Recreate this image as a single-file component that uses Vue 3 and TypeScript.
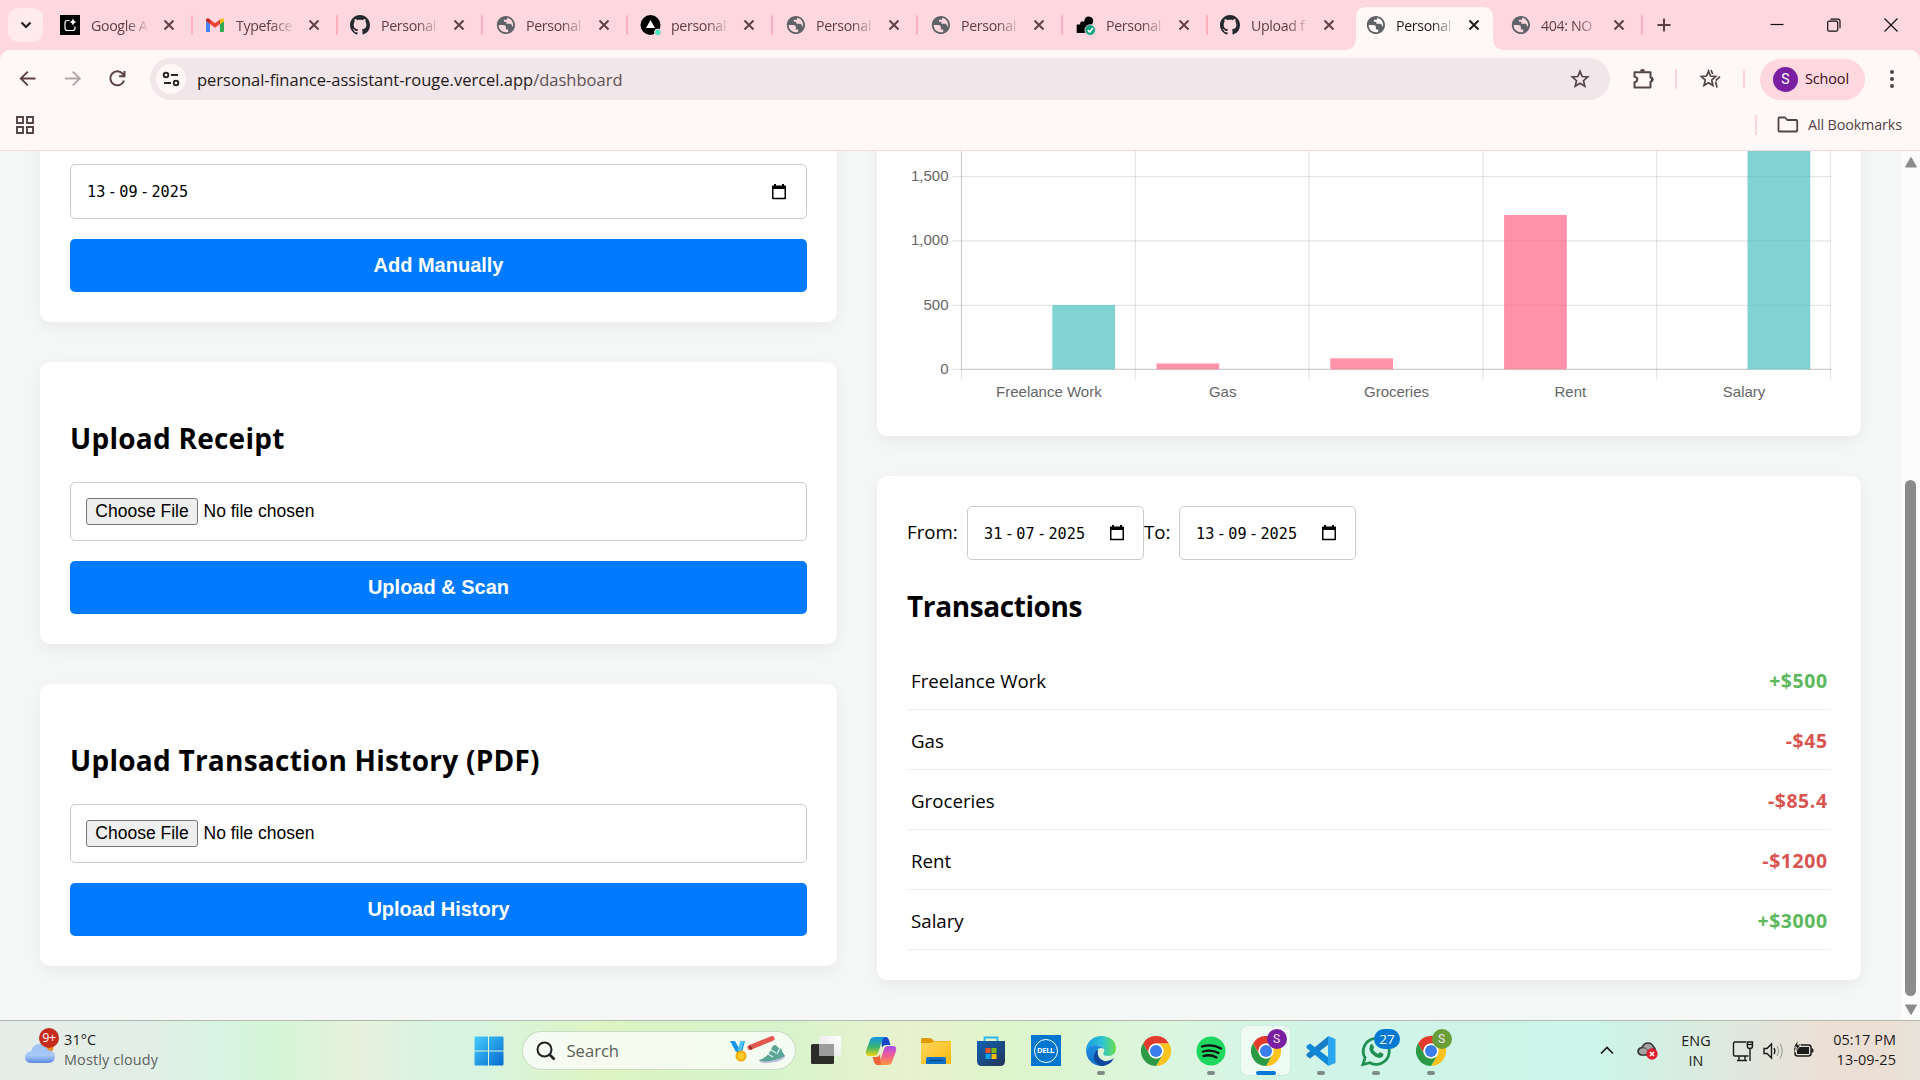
<script setup lang="ts">
interface Tab {
  title: string
  icon: 'studio' | 'gmail' | 'github' | 'globe' | 'vercel' | 'render'
  active?: boolean
}

const tabs: Tab[] = [
  { title: 'Google A', icon: 'studio' },
  { title: 'Typeface', icon: 'gmail' },
  { title: 'Personal', icon: 'github' },
  { title: 'Personal', icon: 'globe' },
  { title: 'personal', icon: 'vercel' },
  { title: 'Personal', icon: 'globe' },
  { title: 'Personal', icon: 'globe' },
  { title: 'Personal', icon: 'render' },
  { title: 'Upload f', icon: 'github' },
  { title: 'Personal', icon: 'globe', active: true },
  { title: '404: NO', icon: 'globe' },
]

const uploads = [
  { heading: 'Upload Receipt', action: 'Upload & Scan' },
  { heading: 'Upload Transaction History (PDF)', action: 'Upload History' },
]

const transactions = [
  { name: 'Freelance Work', amount: 500 },
  { name: 'Gas', amount: -45 },
  { name: 'Groceries', amount: -85.4 },
  { name: 'Rent', amount: -1200 },
  { name: 'Salary', amount: 3000 },
]

const formatAmount = (n: number): string => `${n < 0 ? '-' : '+'}$${Math.abs(n)}`

const AXIS_X = 54.5
const BASE_Y = 188.3
const COL = 173.8
const UNIT = 64.3 / 500

const bars = transactions.map((t, i) => {
  const height = Math.abs(t.amount) * UNIT
  return {
    label: t.name,
    center: AXIS_X + COL * (i + 0.5),
    x: AXIS_X + COL * i + (t.amount > 0 ? 90.8 : 21.2),
    y: BASE_Y - height,
    height,
    fill: t.amount > 0 ? 'rgba(75,192,192,0.7)' : 'rgba(255,99,132,0.7)',
  }
})

const yTicks = [
  { label: '0', y: BASE_Y },
  { label: '500', y: BASE_Y - 64 },
  { label: '1,000', y: BASE_Y - 128.4 },
  { label: '1,500', y: BASE_Y - 192.8 },
]

const ranges = [
  { label: 'From:', parts: ['31', '07', '2025'] },
  { label: 'To:', parts: ['13', '09', '2025'] },
]
</script>

<template>
  <div class="screen">
    <svg width="0" height="0" class="defs">
      <defs>
        <symbol id="chrome" viewBox="0 0 48 48">
          <path fill="#e33b2e" d="M24 12h20.8A24 24 0 0 0 3.2 12L13.6 30A12 12 0 0 1 24 12z" />
          <path fill="#fcc31e" d="M44.8 12H24a12 12 0 0 1 10.4 18L24 48A24 24 0 0 0 44.8 12z" />
          <path fill="#2c9a45" d="M3.2 12l10.4 18a12 12 0 0 0 20.8 0L24 48A24 24 0 0 1 3.2 12z" />
          <circle cx="24" cy="24" r="12" fill="#fff" />
          <circle cx="24" cy="24" r="9.6" fill="#3b7ded" />
        </symbol>
        <symbol id="calendar" viewBox="0 0 14 16">
          <path fill="#000" fill-rule="evenodd" d="M2 0h2v1.5h6V0h2v1.5h1.2q.8 0 .8.8v12.2q0 .8-.8.8H.8q-.8 0-.8-.8V2.300q0-.8.8-.8H2zM1.500 5v8.800h11V5z" />
        </symbol>
        <symbol id="close" viewBox="0 0 12 12">
          <path d="M1.500 1.500l9 9M10.500 1.500l-9 9" stroke="currentColor" stroke-width="1.900" fill="none" />
        </symbol>
      </defs>
    </svg>

    <header class="browser">
      <div class="tabstrip">
        <button class="tab-search">
          <svg width="12" height="8" viewBox="0 0 12 8"><path d="M1.500 1.500L6 6l4.500-4.500" fill="none" stroke="#1f1a1b" stroke-width="2.200" /></svg>
        </button>
        <div class="tabs">
          <div v-for="(tab, i) in tabs" :key="i" class="tab" :class="{ active: tab.active, 'no-sep': i === 8 || i === 9 }">
            <svg v-if="tab.icon === 'studio'" class="favicon" viewBox="0 0 20 20">
              <rect width="20" height="20" fill="#000" />
              <path d="M9.500 5.500h-2Q5 5.500 5 8v5q0 2.500 2.500 2.500h5q2.500 0 2.500-2.500v-1.500" fill="none" stroke="#fff" stroke-width="1.200" />
              <path d="M13 3q.5 3.500 3.500 4-3 .5-3.500 4-.5-3.500-3.500-4 3-.5 3.500-4z" fill="#fff" />
            </svg>
            <svg v-else-if="tab.icon === 'gmail'" class="favicon" viewBox="0 0 20 20">
              <path fill="#4285f4" d="M1 17V6l4 3v8H2z" />
              <path fill="#34a853" d="M15 17V9l4-3v10q0 1-1 1z" />
              <path fill="#fbbc04" d="M15 9V4.500l1-.8q3-1.200 3 1.800V6z" />
              <path fill="#c5221f" d="M1 6v-.5Q1 2.500 4 3.700L5 4.500V9z" />
              <path fill="#ea4335" d="M5 4.500L10 8.200l5-3.700V9l-5 3.700L5 9z" />
            </svg>
            <svg v-else-if="tab.icon === 'github'" class="favicon" viewBox="0 0 16 16">
              <path fill="#24292f" d="M8 0C3.580 0 0 3.580 0 8c0 3.540 2.290 6.530 5.470 7.590.4.070.55-.17.55-.38 0-.19-.01-.82-.01-1.490-2.010.37-2.530-.49-2.690-.94-.09-.23-.48-.94-.82-1.130-.28-.15-.68-.52-.01-.53.63-.01 1.080.58 1.230.82.72 1.210 1.870.87 2.330.66.070-.52.28-.87.51-1.070-1.780-.2-3.640-.89-3.640-3.950 0-.87.31-1.590.82-2.150-.08-.2-.36-1.020.08-2.120 0 0 .67-.21 2.200.82.64-.18 1.320-.27 2-.27s1.360.09 2 .27c1.530-1.040 2.200-.82 2.200-.82.44 1.100.16 1.920.08 2.120.51.56.82 1.270.82 2.150 0 3.070-1.870 3.750-3.650 3.950.29.25.54.73.54 1.480 0 1.070-.01 1.930-.01 2.200 0 .21.15.46.55.38A8.010 8.010 0 0 0 16 8c0-4.420-3.580-8-8-8z" />
            </svg>
            <svg v-else-if="tab.icon === 'globe'" class="favicon" viewBox="0 1 22 22">
              <path fill="#5f6368" d="M12 2C6.480 2 2 6.480 2 12s4.480 10 10 10 10-4.480 10-10S17.520 2 12 2zm-8 10h4.700c2.300 0 3.300.9 3.300 2.800v2.200h2.500v2.600c-5 1.600-10.500-2-10.500-7.600zm15.800 1.800c-.7-.2-1.300-.8-1.500-1.800-.2-1-.9-1.500-2-1.500H12.500V8.500H9.800V6.300h3.500V4.100c4.400.7 7.300 4.800 6.500 9.700z" />
            </svg>
            <svg v-else-if="tab.icon === 'vercel'" class="favicon" viewBox="-0.5 0 20 20">
              <circle cx="10" cy="10" r="10" fill="#000" />
              <path d="M10 5l4.500 8h-9z" fill="#fff" />
              <circle cx="17.300" cy="17.300" r="3.300" fill="#50e3c2" stroke="#ffd7de" />
            </svg>
            <svg v-else class="favicon" viewBox="-0.7 0 20 20">
              <path d="M1 18V9.500h3.500V8q0-1.500 1.500-1.500h2.500Q9 1.500 13 1.500q4.500.3 4.500 4.500 0 3.500-4 4.500v7.500z" fill="#000" />
              <circle cx="14.500" cy="15" r="5.300" fill="#0ea37f" stroke="#ffd7de" stroke-width=".8" />
              <path d="M12 15l2 2 3.200-4" fill="none" stroke="#fff" stroke-width="1.600" />
            </svg>
            <span class="tab-title">{{ tab.title }}</span>
            <svg class="tab-close" width="12" height="12"><use href="#close" /></svg>
          </div>
        </div>
        <svg class="new-tab" width="14" height="14" viewBox="0 0 14 14"><path d="M7 .5v13M.5 7h13" stroke="#5c4046" stroke-width="2" /></svg>
        <div class="window-controls">
          <svg width="14" height="14" viewBox="0 0 14 14"><path d="M.5 6.500h13" stroke="#111" stroke-width="1.200" /></svg>
          <svg width="14" height="14" viewBox="0 0 14 14" fill="none" stroke="#111" stroke-width="1.200"><rect x=".7" y="3.200" width="10" height="10" rx="1.500" /><path d="M3.500 1.200H11q2 0 2 2v7" /></svg>
          <svg width="14" height="14" viewBox="0 0 14 14"><path d="M.5.5l13 13M13.500.5l-13 13" stroke="#111" stroke-width="1.200" /></svg>
        </div>
      </div>

      <div class="toolbar">
        <svg class="nav" width="20" height="20" viewBox="0 0 20 20" fill="none" stroke="#5c4046" stroke-width="1.900"><path d="M17.500 9.500H3M9.800 2.600L2.800 9.500l7 6.900" /></svg>
        <svg class="nav" width="20" height="20" viewBox="0 0 20 20" fill="none" stroke="#b3a5a7" stroke-width="1.900"><path d="M2 9.500h15M9.800 2.600l7 6.900-7 6.900" /></svg>
        <svg class="nav" width="20" height="20" viewBox="0 0 20 20" fill="none" stroke="#5c4046" stroke-width="2"><path d="M16 11.500A7 7 0 1 1 15 5.200L16.500 7M16.500 2v5.300h-5.400" /></svg>
        <div class="omnibox">
          <span class="site-info">
            <svg width="18" height="16" viewBox="0 0 18 16" fill="none" stroke="#2a2224" stroke-width="1.900"><circle cx="4" cy="4" r="2.300" /><path d="M9 4h7M2 12h7" /><circle cx="14" cy="12" r="2.300" /></svg>
          </span>
          <span class="url">personal-finance-assistant-rouge.vercel.app<span class="path">/dashboard</span></span>
          <svg class="bookmark-star" width="20" height="20" viewBox="0 0 20 20" fill="none" stroke="#544347" stroke-width="1.700"><path d="M10 2.300l2.200 5.200 5.600.5-4.300 3.700 1.300 5.500L10 14.300l-4.800 2.900 1.300-5.500L2.200 8l5.600-.5z" /></svg>
        </div>
        <svg class="ext" width="22" height="22" viewBox="0 0 22 22"><path d="M2.500 4.200h16v5.300a2 2 0 0 1 0 4v6h-16v-5.200q2.800-.4 2.800-2.800T2.500 8.700z" fill="none" stroke="#544347" stroke-width="2" stroke-linejoin="round" /><path d="M8 3.500a2.500 2.500 0 0 1 5 0zM19 9a2.500 2.500 0 0 1 0 5z" fill="#544347" /></svg>
        <i class="sep" />
        <svg class="split-star" width="22" height="22" viewBox="0 0 22 22" fill="none" stroke="#544347" stroke-width="1.700"><path d="M9.500 3l2 5 5.200.5-4 3.500 1.200 5.500-4.400-2.800L5 17.500 6.300 12l-4-3.500L7.600 8zM12 2l1.700 4M21 8.700l-4.300 4M16.500 13.500l1.600 6" /></svg>
        <i class="sep" />
        <div class="profile"><span class="avatar">S</span><span class="profile-name">School</span></div>
        <svg class="menu" width="6" height="20" viewBox="0 0 6 20" fill="#544347"><circle cx="3" cy="3" r="2" /><circle cx="3" cy="10" r="2" /><circle cx="3" cy="17" r="2" /></svg>
      </div>

      <div class="bookmarks">
        <svg width="18" height="18" viewBox="0 0 18 18" fill="none" stroke="#544347" stroke-width="1.900"><path d="M1 1h6v6H1zM11 1h6v6h-6zM1 11h6v6H1zM11 11h6v6h-6z" /></svg>
        <i class="sep" />
        <svg class="folder" width="22" height="18" viewBox="0 0 22 18" fill="none" stroke="#544347" stroke-width="1.800" stroke-linejoin="round"><path d="M1.500 14.500v-12q0-1 1-1H8L10.200 4h9q1 0 1 1v9.500q0 1-1 1H2.500q-1 0-1-1z" /></svg>
        <span class="all-bookmarks">All Bookmarks</span>
      </div>
    </header>

    <main class="viewport">
      <div class="page">
        <div class="column left">
          <section class="card manual">
            <div class="field date wide">
              <span class="date-text"><span>13</span><i>-</i><span>09</span><i>-</i><span>2025</span></span>
              <svg width="14" height="16"><use href="#calendar" /></svg>
            </div>
            <button class="primary">Add Manually</button>
          </section>
          <section v-for="u in uploads" :key="u.heading" class="card upload">
            <h2>{{ u.heading }}</h2>
            <div class="field file"><span class="choose">Choose File</span><span class="file-name">No file chosen</span></div>
            <button class="primary">{{ u.action }}</button>
          </section>
        </div>

        <div class="column right">
          <section class="card chart-card">
            <svg class="chart" width="924" height="225" viewBox="0 0 924 225">
              <g stroke="rgba(0,0,0,0.1)" stroke-width="1.250">
                <path v-for="t in yTicks" :key="t.label" :d="`M45 ${t.y}H924`" />
                <path v-for="n in 6" :key="n" :d="`M${AXIS_X + COL * (n - 1)} -40V198.500`" />
                <path :d="`M${AXIS_X} -40V${BASE_Y}H924`" fill="none" />
              </g>
              <rect v-for="b in bars" :key="b.label" :x="b.x" :y="b.y" width="62.700" :height="b.height" :fill="b.fill" />
              <g class="tick-text" text-anchor="end">
                <text v-for="t in yTicks" :key="t.label" x="41.500" :y="t.y + 4.4">{{ t.label }}</text>
              </g>
              <g class="tick-text" text-anchor="middle">
                <text v-for="b in bars" :key="b.label" :x="b.center + 0.5" y="216">{{ b.label }}</text>
              </g>
            </svg>
          </section>

          <section class="card list-card">
            <div class="filters">
              <label v-for="r in ranges" :key="r.label">
                <span class="filter-label">{{ r.label }}</span>
                <span class="field date">
                  <span class="date-text"><span>{{ r.parts[0] }}</span><i>-</i><span>{{ r.parts[1] }}</span><i>-</i><span>{{ r.parts[2] }}</span></span>
                  <svg width="14" height="16"><use href="#calendar" /></svg>
                </span>
              </label>
            </div>
            <h2>Transactions</h2>
            <ul>
              <li v-for="t in transactions" :key="t.name">
                <span>{{ t.name }}</span>
                <b :class="t.amount < 0 ? 'expense' : 'income'">{{ formatAmount(t.amount) }}</b>
              </li>
            </ul>
          </section>
        </div>
      </div>
      <div class="scrollbar">
        <svg width="12" height="11" viewBox="0 0 12 11"><path d="M6 .5L11.500 10H.5z" fill="#8b8b8b" stroke="#8b8b8b" stroke-linejoin="round" /></svg>
        <i class="thumb" />
        <svg width="12" height="11" viewBox="0 0 12 11"><path d="M6 10.500L11.500 1H.5z" fill="#8b8b8b" stroke="#8b8b8b" stroke-linejoin="round" /></svg>
      </div>
    </main>

    <footer class="taskbar">
      <div class="weather">
        <span class="weather-icon">
          <svg width="32" height="22" viewBox="0 0 32 22">
            <defs><linearGradient id="cl" x2="0" y2="1"><stop stop-color="#9cc0f5" /><stop offset=".6" stop-color="#a9c8f8" /><stop offset="1" stop-color="#5d88df" /></linearGradient></defs>
            <circle cx="25" cy="6" r="4.500" fill="#f28a1c" />
            <path d="M8 21q-7 0-7-6 0-5 6-5.500Q8.500 2 16 2q6 0 8 6 7 .5 7 6.500T24 21z" fill="url(#cl)" />
          </svg>
          <span class="alert">9+</span>
        </span>
        <div class="weather-text"><span>31°C</span><span class="dim">Mostly cloudy</span></div>
      </div>

      <div class="launcher">
        <svg class="start" width="30" height="30" viewBox="0 0 30 30">
          <defs><linearGradient id="wn" x2="1" y2="1"><stop stop-color="#46cdfb" /><stop offset="1" stop-color="#0569cf" /></linearGradient></defs>
          <path fill="url(#wn)" d="M1.500.5H14v14H.5v-13q0-1 1-1zM15 .5h13.500q1 0 1 1v13H15zM.5 15.500H14v14H1.500q-1 0-1-1zM15 15.500h14.500v13q0 1-1 1H15z" />
        </svg>
        <div class="search">
          <svg width="20" height="20" viewBox="0 0 20 20" fill="none" stroke="#222" stroke-width="2"><circle cx="8.500" cy="8.500" r="7" /><path d="M13.500 13.500l5 5" stroke-width="2.600" /></svg>
          <span>Search</span>
          <svg class="highlight" width="56" height="30" viewBox="0 0 56 30">
            <path d="M0 5h5l4 7 1.500-7H15l-3 11H6z" fill="#1597e8" />
            <path d="M10 5h4l-3 10H8z" fill="#53c5f7" />
            <circle cx="11" cy="20" r="5.500" fill="#f5a800" /><circle cx="11" cy="20" r="3.500" fill="#ffcc25" />
            <path d="M20 11.500L42 2.500" stroke="#e4574f" stroke-width="5" stroke-linecap="round" /><path d="M19.500 10l2 3.500" stroke="#9b2b31" stroke-width="2.500" />
            <path d="M29 24q8-2 12-10 1-5 5-5 2 4 5 3 1 4 4 8-2 5-12 6-13 1-14-2z" fill="#5aa596" />
            <path d="M29 25q14 2 26-5 0 4-11 6-12 3-15-1z" fill="#c9bfe2" />
            <path d="M38 18l5 3M41 14l5 3M50 12l-3 6" stroke="#dff3ee" stroke-width="1.200" />
          </svg>
        </div>
        <div class="apps">
          <span class="app">
            <svg width="30" height="30" viewBox="0 0 30 30"><defs><linearGradient id="tv" x1="1" x2="0" y2="1"><stop stop-color="#fff" /><stop offset="1" stop-color="#e0e0e0" /></linearGradient></defs><rect y="8" width="23" height="20" rx="1.500" fill="#2c2c2a" /><rect x="8" width="22" height="20" rx="1.500" fill="url(#tv)" /><path d="M8 8h15v12H9.500Q8 20 8 18.500z" fill="#9c9c9c" /></svg>
          </span>
          <span class="app">
            <svg width="32" height="30" viewBox="0 0 32 30">
              <defs>
                <linearGradient id="c1" x2="0" y2="1"><stop stop-color="#1397e8" /><stop offset=".55" stop-color="#3fb46b" /><stop offset="1" stop-color="#f3d513" /></linearGradient>
                <linearGradient id="c2" x2="0" y2="1"><stop stop-color="#a74fe8" /><stop offset=".5" stop-color="#ef5d92" /><stop offset="1" stop-color="#fb9a3c" /></linearGradient>
              </defs>
              <path d="M16 1h5q2 0 3 3l1.500 5H21q-3 0-4 3z" fill="#1647c9" />
              <path d="M10 1h10q-2 1-3 4l-4 12q-1 3-4 3H4q-4 0-3-5L5 4q1-3 5-3z" fill="url(#c1)" />
              <path d="M22 29H12q2-1 3-4l4-12q1-3 4-3h5q4 0 3 5l-4 11q-1 3-5 3z" fill="url(#c2)" />
              <path d="M16 29h-4q-2 0-3-3l-1.500-5H11q3 0 4-3z" fill="#f0643a" />
            </svg>
          </span>
          <span class="app">
            <svg width="30" height="28" viewBox="0 0 30 28"><defs><linearGradient id="fd" x2="1" y2="1"><stop stop-color="#ffd75e" /><stop offset="1" stop-color="#fdb90f" /></linearGradient></defs><path d="M0 8V2.500Q0 1 1.500 1H9q1.500 0 2.500 1.500L13 4h15.500q1.500 0 1.500 1.500V8z" fill="#de9b06" /><path d="M0 6h9q2 0 3.500-1.500H30V27H0z" fill="url(#fd)" /><path d="M5 27v-5q0-2 2-2h16q2 0 2 2v5z" fill="#0a70c8" /><path d="M8.500 23.500h13" stroke="#05427f" stroke-width="1.300" /></svg>
          </span>
          <span class="app">
            <svg width="30" height="30" viewBox="0 0 30 30"><defs><linearGradient id="st" x2="1" y2="1"><stop stop-color="#1062b4" /><stop offset="1" stop-color="#233457" /></linearGradient></defs><path d="M8.500 7V1.500h13V7" fill="none" stroke="#2db8f0" stroke-width="1.800" /><path d="M1 5h28v20q0 5-5 5H6q-5 0-5-5z" fill="url(#st)" /><path d="M9.500 12h5v5h-5z" fill="#f35325" /><path d="M15.500 12h5v5h-5z" fill="#81bc06" /><path d="M9.500 18h5v5h-5z" fill="#05a6f0" /><path d="M15.500 18h5v5h-5z" fill="#ffba08" /></svg>
          </span>
          <span class="app"><span class="dell"><b>DELL</b></span></span>
          <span class="app">
            <svg width="30" height="30" viewBox="0 0 30 30">
              <defs><linearGradient id="eg" x2="1"><stop stop-color="#1b9de2" /><stop offset=".55" stop-color="#2cc3d3" /><stop offset="1" stop-color="#6be04c" /></linearGradient><linearGradient id="eb" x2="0" y2="1"><stop stop-color="#1d8fe0" /><stop offset="1" stop-color="#1470c8" /></linearGradient></defs>
              <path d="M0 14A15 15 0 0 1 15 0q14.500.5 15 12.500-.5 7.500-7.500 7.500-5 0-5.500-2.500 2-1.500 1-4.500-2-4-8-4-6 0-10 5z" fill="url(#eg)" />
              <path d="M0 14q3-5 10-5 6 .5 8 4-5-2.500-7.500 2-2 7 5 12l3 2.700Q15 30.500 10 29 0 25 0 14z" fill="url(#eb)" />
              <path d="M12 13.500q-1.500 9 6 11.500 5 1 10-3-4 8-13 8-8-3-7-10 .5-4 4-6.500z" fill="#11479a" />
            </svg>
            <i class="dot" />
          </span>
          <span class="app"><svg width="30" height="30"><use href="#chrome" /></svg></span>
          <span class="app">
            <svg width="30" height="30" viewBox="0 0 30 30"><circle cx="15" cy="15" r="14.500" fill="#1ed760" /><path d="M6 10.500q10-3 19 2M7 15.500q8.500-2.500 15.500 1.500M7.500 20q7-2 13 1.500" fill="none" stroke="#111" stroke-width="2.300" stroke-linecap="round" /></svg>
            <i class="dot" />
          </span>
          <span class="app current"><svg width="30" height="30"><use href="#chrome" /></svg><em class="who purple">S</em><i class="dot" /></span>
          <span class="app">
            <svg width="30" height="30" viewBox="0 0 30 30"><path d="M22.500 0v8.500L4 22.500.5 20v-2z" fill="#1a7fc9" /><path d="M22.500 30v-8.500L4 7.500.5 10v2z" fill="#1188d8" /><path d="M22 0l7.500 3v24L22 30z" fill="#2aa5ee" /></svg>
            <i class="dot" />
          </span>
          <span class="app">
            <svg width="30" height="30" viewBox="0 0 30 30"><path d="M2 28.500l2-6.700A13 13 0 1 1 9 26.700z" fill="none" stroke="#1f8f52" stroke-width="2.800" /><path d="M10 8q1.500-.5 2.500 2l.5 2q-1 1-1 1.500 2 3.500 5 4.500l2-2 3.500 2q0 3.500-4 4-4-.3-8-4.500-4-5-.5-9.500z" fill="#1f8f52" /></svg>
            <em class="count">27</em><i class="dot" />
          </span>
          <span class="app"><svg width="30" height="30"><use href="#chrome" /></svg><em class="who green">S</em><i class="dot" /></span>
        </div>
      </div>

      <div class="tray">
        <svg class="chevron" width="14" height="9" viewBox="0 0 14 9"><path d="M1 7.500l6-6 6 6" fill="none" stroke="#1b1b1b" stroke-width="1.700" /></svg>
        <svg class="cloud" width="22" height="20" viewBox="0 0 22 20"><path d="M4 14q-3-1-3-4 .5-3 4-3.500Q7 2 11 2t5.500 4q2 1 2 5l-7 3z" fill="#a5a5a5" stroke="#333" stroke-width="1.600" /><path d="M5 6.500q4 0 6 3l7-3" fill="none" stroke="#444" /><circle cx="15" cy="13" r="5.700" fill="#e0212e" /><path d="M13 11l4 4M17 11l-4 4" stroke="#fff" stroke-width="1.500" /></svg>
        <div class="lang"><span>ENG</span><span>IN</span></div>
        <svg class="net" width="22" height="22" viewBox="0 0 22 22" fill="none" stroke="#1b1b1b" stroke-width="1.400"><path d="M14 2H3Q1.500 2 1.500 3.500v11Q1.500 16 3 16h13.500M7 16v4M13 16v4M5 20.500h10M18 9v12" /><path d="M15.300 2h5.200v4q0 2.500-2.600 2.500T15.300 6zM15.300 4.500h5" /></svg>
        <svg class="vol" width="22" height="18" viewBox="0 0 22 18" fill="none" stroke="#1b1b1b" stroke-width="1.400"><path d="M1 6.500h3L8.500 2v14L4 11.500H1z" /><path d="M11 6q1.800 3 0 6" /><path d="M14 4q3 5 0 10M17 1.500q4.500 7.500 0 15" stroke="#a8aea6" /></svg>
        <svg class="bat" width="22" height="18" viewBox="0 0 22 18"><rect x="2" y="4" width="16" height="11" rx="2.500" fill="none" stroke="#1b1b1b" stroke-width="1.500" /><rect x="4" y="6" width="12" height="7" fill="#1b1b1b" /><path d="M18.500 7.500H20q1 2 0 4h-1.500z" fill="#1b1b1b" /><path d="M5 -1L.5 6h3L2 11 7.800 4h-3z" fill="#1b1b1b" stroke="#e6e4da" stroke-width=".9" /></svg>
        <div class="clock"><span>05:17 PM</span><span>13-09-25</span></div>
      </div>
    </footer>
  </div>
</template>

<style>
html, body { margin: 0; overflow: hidden; }
</style>

<style scoped>
* { box-sizing: border-box; }
.screen {
  width: 1920px; height: 1080px; display: flex; flex-direction: column; overflow: hidden;
  font-family: "Open Sans", "Noto Sans", sans-serif; color: #000;
}
.defs { position: absolute; }
svg { display: block; flex: none; overflow: visible; }
button { border: 0; padding: 0; font: inherit; }
i, em { font-style: normal; }

.browser { height: 151px; flex: none; background: #ffd7de; border-bottom: 1px solid #f9d9df; display: flex; flex-direction: column; }
.tabstrip { height: 50px; flex: none; display: flex; align-items: center; }
.tab-search { width: 35px; height: 34px; margin: 0 5px 0 8px; border-radius: 10px; background: #ffebee; display: flex; align-items: center; justify-content: center; }
.tabs { display: flex; height: 50px; }
.tab { width: 145px; height: 50px; display: flex; align-items: center; padding-left: 12px; position: relative; color: #5c4046; }
.tab::after { content: ""; position: absolute; right: 0; top: 15px; width: 2px; height: 20px; border-radius: 1px; background: #ffb0bf; }
.tab.no-sep::after { display: none; }
.tab.active { color: #1f1a1b; }
.tab.active::before {
  content: ""; position: absolute; left: -9px; top: 7px; width: 161px; height: 43px; background: #fff8f6;
  clip-path: path("M0 43Q12 43 12 31V11Q12 0 23 0H138Q149 0 149 11V31Q149 43 161 43Z");
}
.tab > * { position: relative; }
.favicon { width: 20px; height: 20px; }
.tab-title {
  margin-left: 11px; width: 57px; white-space: nowrap; font-size: 14.2px; letter-spacing: -0.35px;
  mask-image: linear-gradient(90deg, #000 62%, transparent 105%);
}
.tab-close { margin-left: 14.5px; }
.new-tab { margin-left: 14px; }
.window-controls { margin-left: auto; display: flex; gap: 43px; padding-right: 22px; }

.toolbar { height: 58px; flex: none; display: flex; align-items: center; background: #fff8f6; border-radius: 10px 10px 0 0; padding-left: 18px; }
.nav { margin-right: 25px; }
.omnibox { width: 1460px; height: 42px; margin-left: -3px; border-radius: 21px; background: #f1e6e9; display: flex; align-items: center; padding: 0 20px 0 6px; flex: none; }
.site-info { width: 30px; height: 30px; border-radius: 50%; background: #fff8f6; display: flex; align-items: center; justify-content: center; }
.url { margin-left: 11px; font-size: 16.5px; letter-spacing: 0; color: #1f1a1b; }
.path { color: #5f5054; }
.bookmark-star { margin-left: auto; }
.sep { width: 2px; height: 20px; border-radius: 1px; background: #ffd3dc; }
.ext { margin: 0 21px 0 22px; }
.split-star { margin: 0 22px 0 22px; }
.profile { width: 105px; height: 41px; margin-left: 15px; border-radius: 21px; background: #ffd7de; display: flex; align-items: center; padding-left: 13px; }
.avatar { width: 25px; height: 25px; border-radius: 50%; background: #7b1fa2; color: #fff; font: 14px "Roboto", sans-serif; line-height: 25px; text-align: center; }
.profile-name { margin: -1px 0 0 7px; font-size: 14.4px; letter-spacing: -0.1px; color: #3a0b18; }
.menu { margin-left: 24px; }

.bookmarks { flex: 1; display: flex; align-items: center; background: #fff8f6; padding: 0 18px 8px 15.5px; }
.bookmarks .sep { margin-left: auto; margin-right: 20px; }
.all-bookmarks { margin: -1px 0 0 9px; width: 94px; white-space: nowrap; font-size: 14.4px; letter-spacing: -0.15px; color: #544347; }

.viewport { height: 869px; flex: none; display: flex; background: #f4f7f6; overflow: hidden; }
.page { width: 1901px; display: flex; gap: 40px; padding-left: 40px; }
.column { display: flex; flex-direction: column; gap: 40px; }
.left { width: 797px; }
.right { width: 984px; }
.card { background: #fff; border-radius: 10px; padding: 30px; box-shadow: 0 5px 15px rgba(0, 0, 0, 0.05); }
.manual, .chart-card { margin-top: -20px; }
.manual { height: 191px; padding-top: 33px; }
.upload { height: 282px; }
.field { border: 1px solid #ccc; border-radius: 5px; background: #fff; display: flex; align-items: center; }
.date { height: 54px; width: 177px; padding: 0 19px 0 16px; justify-content: space-between; }
.date.wide { height: 55px; width: 737px; padding-right: 20px; }
.date-text { display: flex; padding-top: 1px; font: 15.2px "DejaVu Sans Mono", monospace; }
.date-text i { margin: 0 2.4px; }
.primary { display: block; width: 737px; height: 53px; margin-top: 20px; border-radius: 5px; background: #007bff; color: #fff; font: bold 20px "Liberation Sans", Arial, sans-serif; }
h2 { margin: 0; font-size: 28px; line-height: 40px; font-weight: 700; white-space: nowrap; }
.upload h2 { margin: 26px 0 24px; letter-spacing: 0.25px; }
.file { height: 59px; padding-left: 15px; font: 17.5px "Liberation Sans", Arial, sans-serif; }
.choose { width: 112px; height: 27px; line-height: 25px; text-align: center; background: #efefef; border: 1px solid #767676; border-radius: 3px; }
.file-name { margin-left: 5.5px; }

.chart-card { height: 305px; padding-top: 50px; }
.tick-text { font: 15px "Liberation Sans", Arial, sans-serif; fill: #666; }
.list-card { height: 504px; }
.filters { display: flex; font-size: 18.7px; }
.filters label { display: flex; align-items: center; }
.filter-label { padding-bottom: 3px; }
.filters label:first-child .filter-label { width: 60px; }
.filters label:last-child .filter-label { width: 35px; }
.list-card h2 { margin-top: 26px; letter-spacing: -0.4px; }
ul { list-style: none; margin: 24px 0 0; padding: 0; }
li { height: 60px; display: flex; justify-content: space-between; align-items: center; padding: 2px 4px 0; border-bottom: 1px solid #eee; font-size: 18.7px; }
li b { font-size: 19.4px; font-weight: 700; letter-spacing: 0.6px; margin-right: -0.6px; }
.income { color: #5cb85c; }
.expense { color: #d9534f; }

.scrollbar { width: 19px; background: #fcfcfc; display: flex; flex-direction: column; align-items: center; padding: 6px 0 5px; }
.thumb { width: 11px; height: 517px; margin: 312px 0 8px; border-radius: 6px; background: #8b8b8b; }

.taskbar {
  height: 60px; flex: none; border-top: 1px solid #b2bab2; display: flex; align-items: center; position: relative;
  background: linear-gradient(90deg, #e6ede9 0, #e2eee7 150px, #d7f4e2 220px, #d5f5d6 275px, #e7f1de 360px, #d7f4e1 440px, #d7f4e1 475px, #def4c2 600px, #d6f4cb 760px, #e9f1cf 910px, #ddf5cb 1010px, #dbf6df 1170px, #d0f4e8 1330px, #cdf5e9 1600px, #dceae0 1710px, #ecdfd5 1830px, #ebdfd6 1890px, #e6e3d8 1920px);
}
.weather { display: flex; align-items: center; padding-left: 25px; width: 474px; }
.weather-icon { position: relative; width: 32px; height: 38px; display: flex; align-items: flex-end; }
.weather-icon svg { margin-bottom: 6px; margin-left: -1px; }
.alert { position: absolute; left: 14px; top: -4px; width: 20px; height: 20px; border-radius: 50%; background: #c42b1c; color: #fff; font-size: 12.5px; line-height: 20px; text-align: center; letter-spacing: -0.5px; }
.weather-text { display: flex; flex-direction: column; margin: -1px 0 0 7px; font-size: 14.4px; letter-spacing: 0.15px; line-height: 20px; color: #1b1b1b; }
.dim { color: #5b625d; }
.launcher { display: flex; align-items: center; }
.search { width: 274px; height: 39px; margin-left: 18px; border-radius: 20px; background: rgba(255, 255, 255, 0.72); border: 1px solid rgba(160, 190, 150, 0.5); display: flex; align-items: center; padding: 0 9px 0 12.5px; font-size: 16.6px; color: #5b5f58; }
.search span { margin-left: 11px; }
.highlight { margin-left: auto; }
.apps { display: flex; margin-left: 2px; }
.app { width: 55px; height: 48px; display: flex; align-items: center; justify-content: center; position: relative; }
.app.current::before { content: ""; position: absolute; left: 3px; top: -1px; width: 49px; height: 49px; border-radius: 6px; background: rgba(255, 255, 255, 0.6); box-shadow: 0 0 1px rgba(0, 0, 0, 0.25); }
.app > svg { position: relative; }
.dot { position: absolute; left: 23.500px; bottom: 0; width: 8px; height: 4px; border-radius: 2px; background: #7d8d83; }
.current .dot { left: 17.500px; width: 20px; background: #0078d4; }
.who { position: absolute; left: 28.5px; top: 2px; width: 20px; height: 20px; border-radius: 50%; color: #f0e4f4; font: 12px "Roboto", sans-serif; line-height: 20px; text-align: center; }
.purple { background: #7b1fa2; }
.green { background: #689f38; }
.count { position: absolute; left: 26px; top: 2px; width: 26px; height: 20px; border-radius: 10px; background: #0078d4; color: #fff; font-size: 13.5px; line-height: 20px; text-align: center; }
.dell { width: 30px; height: 31px; background: #0076ce; display: flex; align-items: center; justify-content: center; }
.dell b { width: 24px; height: 24px; border: 1.500px solid #fff; border-radius: 50%; color: #fff; font-size: 7.500px; line-height: 21px; text-align: center; letter-spacing: -0.3px; }
.tray { margin-left: auto; display: flex; align-items: center; padding-right: 24px; font-size: 14.4px; line-height: 20px; color: #1b1b1b; }
.chevron { margin-right: 1px; }
.cloud { margin-left: 22px; }
.lang { width: 32px; margin: 0 0 0 21px; display: flex; flex-direction: column; align-items: center; }
.net { margin-left: 20px; }
.vol { margin-left: 9px; }
.bat { margin: -2px 0 0 8px; }
.clock { width: 66px; margin: -1px 0 0 15px; display: flex; flex-direction: column; align-items: flex-end; white-space: nowrap; letter-spacing: 0.1px; }
</style>
